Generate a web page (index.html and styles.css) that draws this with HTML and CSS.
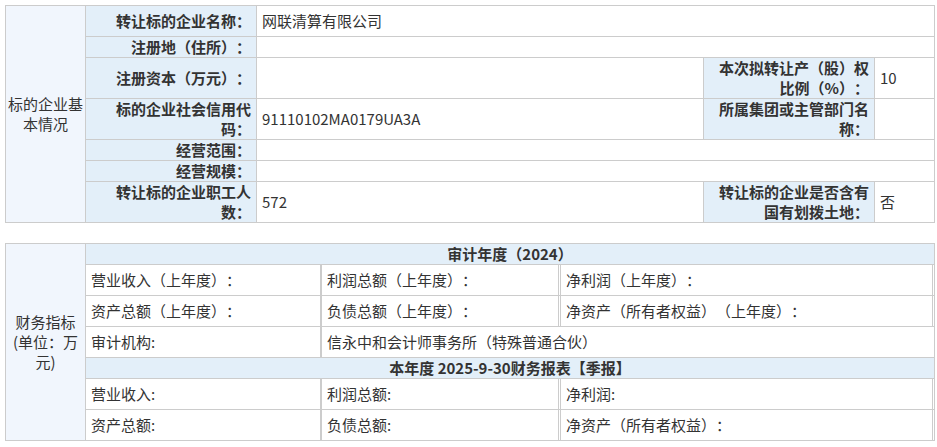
FILE: index.html
```html
<!DOCTYPE html>
<html lang="zh-CN">
<head>
<meta charset="utf-8">
<title>标的企业基本情况</title>
<link rel="stylesheet" href="styles.css">
</head>
<body>
<div class="page">
  <section class="info">
    <div class="side side-info">标的企业基本情况</div>

    <div class="cell label first">转让标的企业名称：</div>
    <div class="cell value first span3">网联清算有限公司</div>

    <div class="cell label">注册地（住所）：</div>
    <div class="cell value span3"></div>

    <div class="cell label">注册资本（万元）：</div>
    <div class="cell value"></div>
    <div class="cell label">本次拟转让产（股）权比例（%）：</div>
    <div class="cell value">10</div>

    <div class="cell label">标的企业社会信用代码：</div>
    <div class="cell value">91110102MA0179UA3A</div>
    <div class="cell label">所属集团或主管部门名称：</div>
    <div class="cell value"></div>

    <div class="cell label">经营范围：</div>
    <div class="cell value span3"></div>

    <div class="cell label">经营规模：</div>
    <div class="cell value span3"></div>

    <div class="cell label">转让标的企业职工人数：</div>
    <div class="cell value">572</div>
    <div class="cell label">转让标的企业是否含有国有划拨土地：</div>
    <div class="cell value">否</div>
  </section>

  <section class="fin">
    <div class="side side-fin">财务指标(单位：万元)</div>

    <div class="head">审计年度（2024）</div>

    <div class="fc col-a">营业收入（上年度）：</div>
    <div class="fc col-b">利润总额（上年度）：</div>
    <div class="fc col-c">净利润（上年度）：</div>

    <div class="fc col-a">资产总额（上年度）：</div>
    <div class="fc col-b">负债总额（上年度）：</div>
    <div class="fc col-c">净资产（所有者权益）（上年度）：</div>

    <div class="fc col-a">审计机构:</div>
    <div class="fc col-bc">信永中和会计师事务所（特殊普通合伙）</div>

    <div class="head">本年度 2025-9-30财务报表【季报】</div>

    <div class="fc col-a">营业收入:</div>
    <div class="fc col-b">利润总额:</div>
    <div class="fc col-c">净利润:</div>

    <div class="fc col-a">资产总额:</div>
    <div class="fc col-b">负债总额:</div>
    <div class="fc col-c">净资产（所有者权益）：</div>
  </section>
</div>
</body>
</html>
```

FILE: styles.css
```css
* {
  box-sizing: border-box;
}

html, body {
  margin: 0;
  padding: 0;
  background: #ffffff;
}

body {
  font-family: "Noto Sans CJK SC", "Microsoft YaHei", sans-serif;
  font-size: 15px;
  line-height: 20px;
  color: #333333;
  text-spacing-trim: space-all;
}

.page {
  padding: 5px;
  width: 940px;
}

/* ---------- table 1 ---------- */
.info {
  display: grid;
  grid-template-columns: 80px 171px 447px 171px 60px;
  width: 930px;
  border-top: 1px solid #cccccc;
  border-left: 1px solid #cccccc;
}

.side {
  grid-column: 1;
  grid-row: 1 / span 7;
  display: flex;
  align-items: center;
  justify-content: center;
  text-align: center;
  padding: 0 1px;
  background: #f1f6fd;
  border-right: 1px solid #cccccc;
  border-bottom: 1px solid #cccccc;
}

.cell {
  display: flex;
  align-items: center;
  min-height: 21px;
  border-right: 1px solid #cccccc;
  border-bottom: 1px solid #cccccc;
}

.cell.first {
  padding-top: 5px;
  padding-bottom: 5px;
}

.label {
  justify-content: flex-end;
  text-align: right;
  font-weight: bold;
  background: #e3eff9;
  padding-left: 5px;
  padding-right: 5px;
}

.value {
  padding-left: 5px;
  padding-right: 5px;
  background: #ffffff;
}

.span3 {
  grid-column: 3 / span 3;
}

/* ---------- table 2 ---------- */
.fin {
  display: grid;
  grid-template-columns: 80px 236px 239px 374px;
  width: 930px;
  margin-top: 20px;
  border-top: 1px solid #cccccc;
  border-left: 1px solid #cccccc;
}

.side-fin {
  grid-row: 1 / span 7;
}

.head {
  grid-column: 2 / span 3;
  text-align: center;
  font-weight: bold;
  background: #e3eff9;
  min-height: 21px;
  border-right: 1px solid #cccccc;
  border-bottom: 1px solid #cccccc;
}

.fc {
  padding: 5px 5px;
  min-height: 31px;
  border-bottom: 1px solid #cccccc;
  white-space: nowrap;
}

.col-a {
  grid-column: 2;
  border-right: 2px solid #cccccc;
}

.col-b {
  grid-column: 3;
  border-right: 3px double #cccccc;
}

.col-c {
  grid-column: 4;
  border-right: 3px double #cccccc;
}

.col-bc {
  grid-column: 3 / span 2;
  border-right: 1px solid #cccccc;
}
```
